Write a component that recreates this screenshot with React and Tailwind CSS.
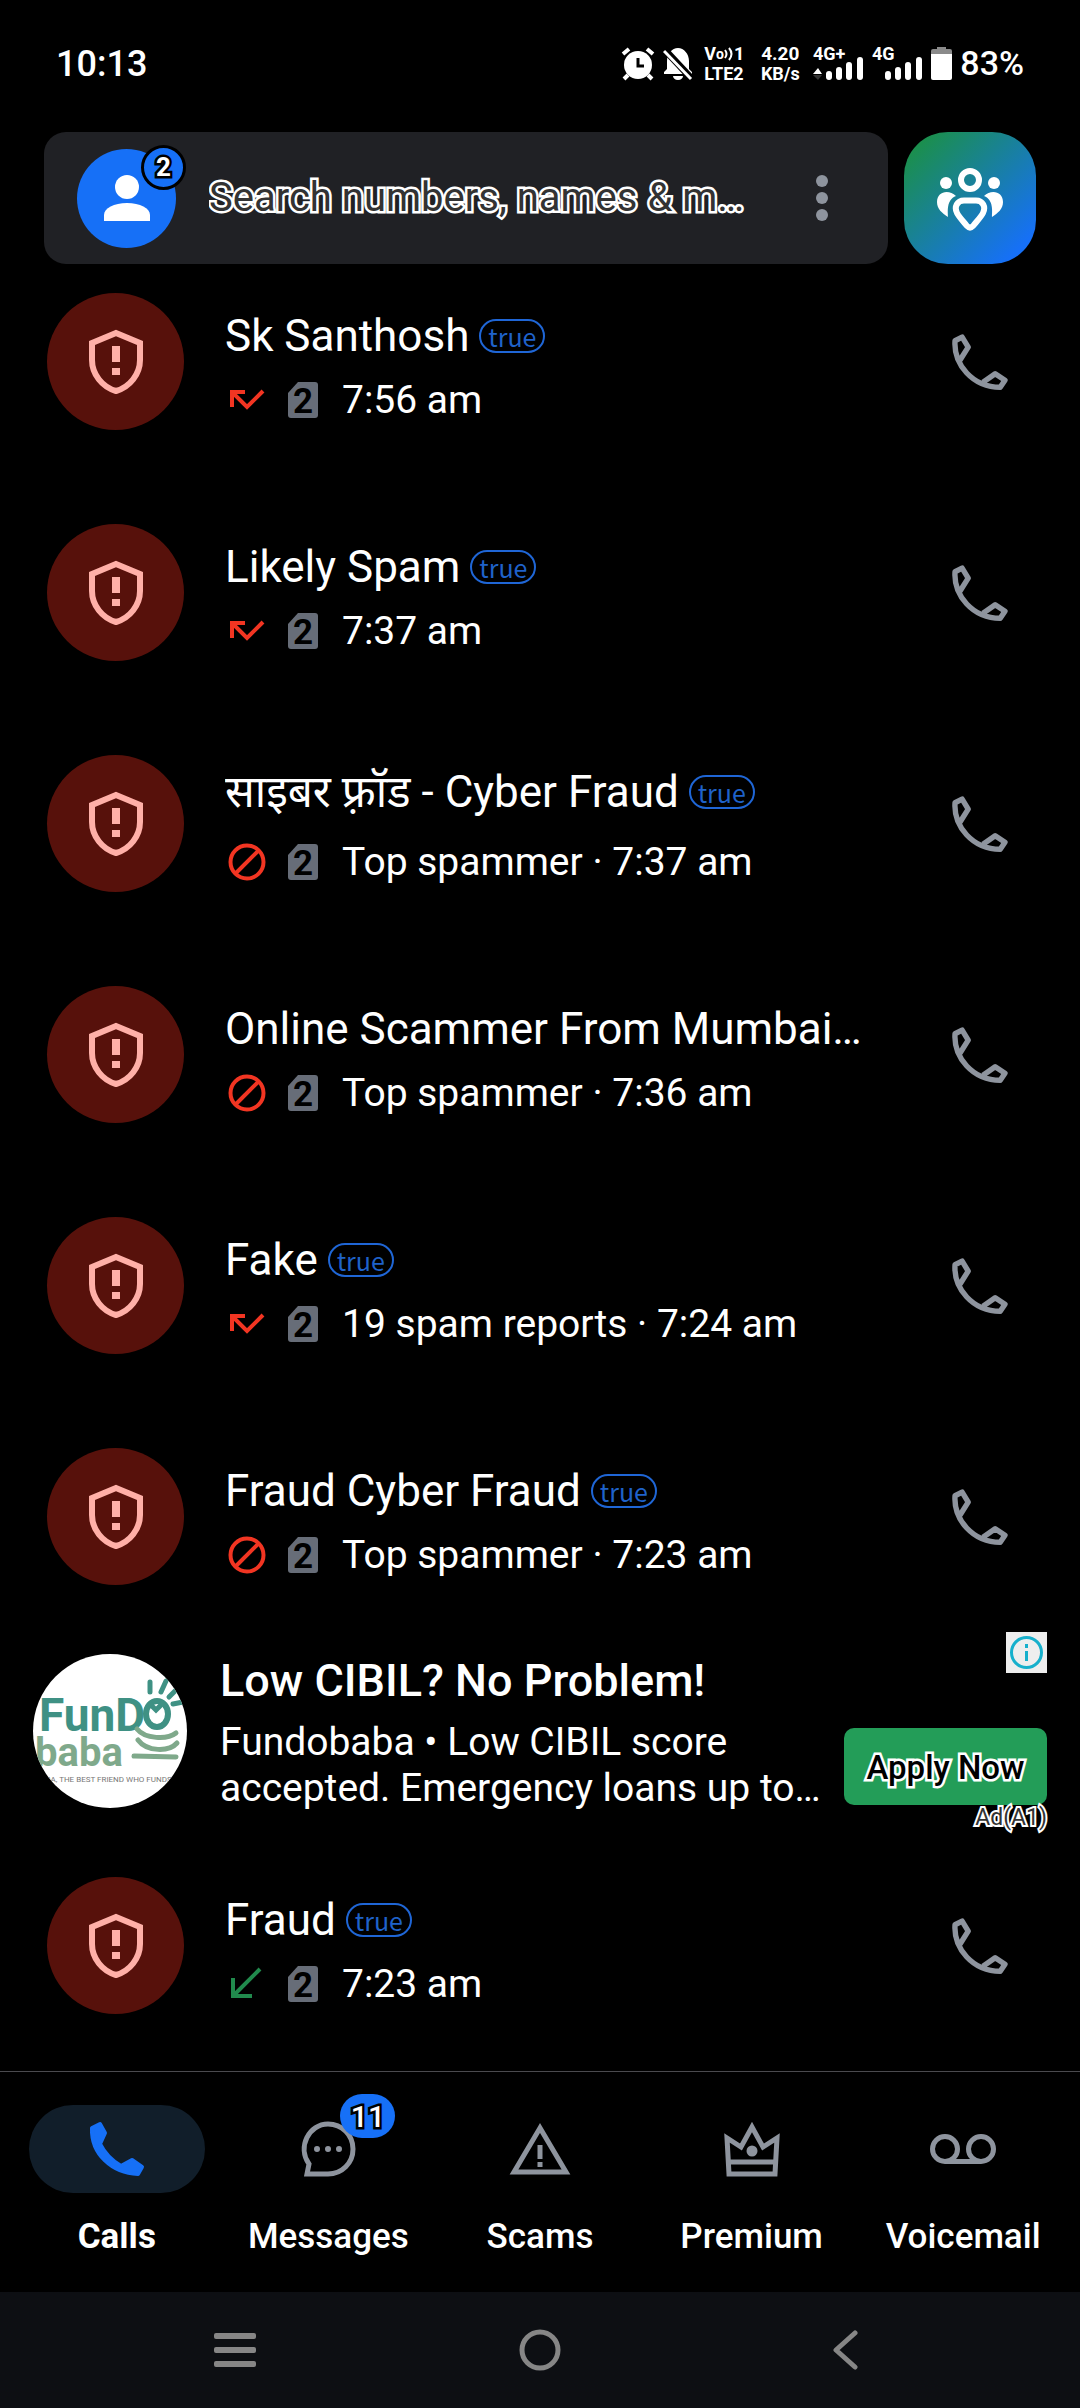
import React from 'react';

const calls = [
  { name: 'Sk Santhosh', type: 'missed', info: '7:56 am', verified: true },
  { name: 'Likely Spam', type: 'missed', info: '7:37 am', verified: true },
  { name: 'साइबर फ़्रॉड - Cyber Fraud', type: 'blocked', info: 'Top spammer · 7:37 am', verified: true, tall: true },
  { name: 'Online Scammer From Mumbai…', type: 'blocked', info: 'Top spammer · 7:36 am' },
  { name: 'Fake', type: 'missed', info: '19 spam reports · 7:24 am', verified: true },
  { name: 'Fraud Cyber Fraud', type: 'blocked', info: 'Top spammer · 7:23 am', verified: true },
];

const callsAfterAd = [
  { name: 'Fraud', type: 'incoming', info: '7:23 am', verified: true },
];

function AlarmIcon() {
  return (
    <svg width="34" height="34" viewBox="0 0 34 34" fill="none">
      <circle cx="17" cy="18" r="14" fill="white" />
      <path d="M2 7 8 2M32 7 26 2M7 28 3 32M27 28 31 32" stroke="white" strokeWidth="4" />
      <path d="M17 11V19H23" stroke="black" strokeWidth="3" />
    </svg>
  );
}

function BellOffIcon() {
  return (
    <svg width="30" height="34" viewBox="0 0 30 34" fill="none">
      <path d="M1 27V25L4 22V14C4 7 9 1 15 1S26 7 26 14V22L29 25V27Z" fill="white" />
      <path d="M10 29H20C20 31 18 33 15 33S10 31 10 29Z" fill="white" />
      <path d="M1 2 29 32" stroke="black" strokeWidth="7" />
      <path d="M1 4 28 32" stroke="white" strokeWidth="3" />
    </svg>
  );
}

function SignalIcon({ label, arrows }) {
  return (
    <svg width="51" height="34" viewBox="0 0 51 34" fill="white" className="overflow-visible font-['Roboto'] text-[18px] font-bold">
      <text x="0" y="13">{label}</text>
      {arrows && <path d="M0 27 5 21 9 27Z" />}
      {arrows && <path d="M0 28H9L5 33Z" fill="#333333" />}
      <rect x="13" y="24" width="6" height="9" rx="3" />
      <rect x="23" y="20" width="6" height="13" rx="3" />
      <rect x="33" y="15" width="6" height="18" rx="3" />
      <rect x="44" y="10" width="6" height="23" rx="3" />
    </svg>
  );
}

function BatteryIcon() {
  return (
    <svg width="21" height="34" viewBox="0 0 21 34">
      <path d="M6 0H15V2H19Q21 2 21 4V10H0V4Q0 2 2 2H6Z" fill="#8a8a8a" />
      <path d="M0 7H21V31Q21 33 19 33H2Q0 33 0 31Z" fill="white" />
    </svg>
  );
}

function StatusBar() {
  return (
    <div className="flex h-11 items-center justify-between px-14 text-4xl font-medium">
      <span>10:13</span>
      <div className="flex items-center">
        <AlarmIcon />
        <span className="ml-2"><BellOffIcon /></span>
        <span className="ml-[11px] flex w-[44px] flex-col text-[18px] leading-5 font-bold">
          <span className="flex items-center justify-between">
            <span className="flex items-center">
              V<span className="text-sm leading-5">o</span>
              <svg width="9" height="14" viewBox="0 0 9 14" fill="none" stroke="white" strokeWidth="2">
                <path d="M1 3Q4 7 1 11M5 1Q10 7 5 13" />
              </svg>
            </span>
            <span className="pr-1">1</span>
          </span>
          <span>LTE2</span>
        </span>
        <span className="ml-2.5 flex w-11 flex-col items-center text-[19px] leading-5 font-bold">
          <span>4.20</span>
          <span className="text-[18px]">KB/s</span>
        </span>
        <span className="ml-[11px]"><SignalIcon label="4G+" arrows /></span>
        <span className="ml-2"><SignalIcon label="4G" /></span>
        <span className="ml-2"><BatteryIcon /></span>
        <span className="ml-2 text-[34px]">83%</span>
      </div>
    </div>
  );
}

function SearchHeader() {
  return (
    <div className="flex gap-4 px-11">
      <div className="flex h-[132px] min-w-0 flex-1 items-center rounded-[22px] bg-[#202125] pr-[54px] pl-[33px]">
        <button aria-label="Profile" className="relative flex size-[99px] shrink-0 items-center justify-center rounded-full bg-[#1670f7]">
          <svg width="46" height="46" viewBox="0 0 46 46" fill="white">
            <circle cx="23" cy="12" r="12" />
            <path d="M0 46V40C0 33 10 28 23 28S46 33 46 40V46Z" />
          </svg>
          <span className="absolute -top-1 -right-2.5 flex size-[45px] items-center justify-center rounded-full border-3 border-black bg-[#1670f7] text-[26px] font-bold [-webkit-text-stroke:5px_black] [paint-order:stroke_fill]">
            2
          </span>
        </button>
        <input
          type="text"
          aria-label="Search"
          placeholder="Search numbers, names & m…"
          className="ml-[30px] h-[60px] min-w-0 flex-1 bg-transparent pl-[3px] text-[40px] text-[#333333] outline-none [-webkit-text-stroke:5px_white] [paint-order:stroke_fill] placeholder:text-[#333333] placeholder:opacity-100"
        />
        <button aria-label="More options" className="shrink-0 px-1.5">
          <svg width="12" height="46" viewBox="0 0 12 46" fill="#8e949e">
            <circle cx="6" cy="6" r="6" />
            <circle cx="6" cy="23" r="6" />
            <circle cx="6" cy="40" r="6" />
          </svg>
        </button>
      </div>
      <button aria-label="Family" className="flex size-[132px] shrink-0 items-center justify-center rounded-[44px] bg-linear-to-br/srgb from-[#1b8f4d] from-10% to-[#1670f7] to-88%">
        <svg width="66" height="65" viewBox="0 0 66 65" fill="white">
          <circle cx="33" cy="14" r="9" fill="none" stroke="white" strokeWidth="6" />
          <circle cx="9" cy="17" r="6" />
          <circle cx="57" cy="17" r="6" />
          <path d="M19 30C9 34 11 46 11 51C5 47 0 43 0 36C0 25 12 23 19 30Z" />
          <path d="M47 30C57 34 55 46 55 51C61 47 66 43 66 36C66 25 54 23 47 30Z" />
          <path
            d="M27 34.5H39C46 34.5 49 41 46 47C44 51 40 55 36 60Q33 63 30 60C26 55 22 51 20 47C17 41 20 34.5 27 34.5Z"
            fill="none"
            stroke="white"
            strokeWidth="6"
          />
        </svg>
      </button>
    </div>
  );
}

function ShieldIcon() {
  return (
    <svg width="54" height="66" viewBox="0 0 54 66" fill="none">
      <path d="M27 4 51 14V31C51 45 41 58 27 62C13 58 3 45 3 31V14Z" stroke="#ffb0a8" strokeWidth="6" />
      <path d="M23 17H31V33H23ZM23 39H31V46H23Z" fill="#ffb0a8" />
    </svg>
  );
}

function PhoneIcon() {
  return (
    <svg width="56" height="56" viewBox="160 101 166 166" fill="none" stroke="#8e949e" strokeWidth="16" strokeLinejoin="round">
      <path d="M184 178 208 140 190 110 169 121C164 192 222 259 303 259L317 238 288 219 252 244" />
    </svg>
  );
}

function CallTypeIcon({ type }) {
  if (type === 'blocked') {
    return (
      <svg width="38" height="38" viewBox="0 0 38 38" fill="none" stroke="#f23522" strokeWidth="4">
        <circle cx="19" cy="19" r="16.5" />
        <path d="M7 31 31 7" />
      </svg>
    );
  }
  if (type === 'incoming') {
    return (
      <svg width="38" height="38" viewBox="0 0 38 38" fill="none" stroke="#218a4d" strokeWidth="4">
        <path d="M32 4 6 30M5 13V31H24" />
      </svg>
    );
  }
  return (
    <svg width="38" height="38" viewBox="0 0 38 38" fill="none" stroke="#f23522" strokeWidth="4">
      <path d="M17 11H4V26M4 11 19 26 35 10" />
    </svg>
  );
}

function SimIcon() {
  return (
    <svg width="30" height="36" viewBox="0 0 30 36" className="overflow-visible font-['Roboto'] text-[35px] font-bold">
      <path d="M10 0H27Q30 0 30 3V33Q30 36 27 36H3Q0 36 0 33V11Z" fill="#676d78" />
      <text x="15" y="31" textAnchor="middle" fill="black">2</text>
    </svg>
  );
}

function CallRow({ call }) {
  return (
    <li className="flex h-[137px] items-center pr-[72px] pl-[47px]">
      <div className="flex size-[137px] shrink-0 items-center justify-center rounded-full bg-[#57110b]">
        <ShieldIcon />
      </div>
      <div className="ml-[41px] min-w-0 flex-1 self-end pb-1.5">
        <div className="flex items-center gap-2.5">
          <span className={call.tall ? 'truncate text-[44px] leading-[68px]' : 'truncate text-[44px] leading-14'}>
            {call.name}
          </span>
          {call.verified && (
            <span className="flex h-[34px] w-[66px] shrink-0 items-center justify-center rounded-full border-2 border-[#1f66d6] font-['Noto_Sans_CJK_SC',sans-serif] text-[25px] leading-7 text-[#1f62c9]">
              true
            </span>
          )}
        </div>
        <div className="mt-3 flex h-12 items-center pl-[3px] text-[39px]">
          <CallTypeIcon type={call.type} />
          <span className="ml-[22px]"><SimIcon /></span>
          <span className="ml-6">{call.info}</span>
        </div>
      </div>
      <button aria-label={`Call ${call.name}`} className="ml-8 shrink-0">
        <PhoneIcon />
      </button>
    </li>
  );
}

function FundobabaLogo() {
  return (
    <svg width="154" height="154" viewBox="0 0 154 154" className="shrink-0 rounded-full bg-white font-['Roboto'] font-bold">
      <text x="6" y="77" fill="#3f9184" className="text-[46px]">FunD</text>
      <ellipse cx="124" cy="60" rx="11" ry="13" fill="white" stroke="#3f9184" strokeWidth="6" />
      <path d="M117 50 123 56 130 49M117 28V38M128 38 133 27M136 43 145 34M140 50 150 48" stroke="#3f9184" strokeWidth="5" strokeLinecap="round" fill="none" />
      <text x="2" y="112" fill="#7fa98b" className="text-[40px]">baba</text>
      <g stroke="#7fa98b" strokeWidth="5" fill="none" strokeLinecap="round">
        <path d="M104 75C112 85 134 86 143 79" />
        <path d="M105 86C114 98 136 98 144 89" />
        <path d="M101 102 143 103" />
      </g>
      <text x="79" y="128" textAnchor="middle" fill="#777777" className="text-[8px] font-normal">
        BA, THE BEST FRIEND WHO FUNDS Y
      </text>
    </svg>
  );
}

function AdCard() {
  return (
    <li className="flex items-start px-[33px]">
      <div className="mt-[22px] shrink-0">
        <FundobabaLogo />
      </div>
      <div className="mt-[23px] ml-[33px] min-w-0 flex-1">
        <h2 className="text-[45px] leading-[52px] font-medium">Low CIBIL? No Problem!</h2>
        <p className="mt-3 text-[39px] leading-[46px]">
          Fundobaba • Low CIBIL score
          <br />
          accepted. Emergency loans up to…
        </p>
      </div>
      <div className="flex shrink-0 flex-col items-end">
        <button aria-label="Ad info" className="flex size-[41px] items-center justify-center bg-[#eeeeee]">
          <svg width="33" height="33" viewBox="0 0 33 33" fill="none" stroke="#17b0cc" strokeWidth="3">
            <circle cx="16.5" cy="16.5" r="15" />
            <path d="M16.5 15V25M16.5 8V12" />
          </svg>
        </button>
        <a href="#apply" className="mt-[55px] flex h-[77px] w-[203px] items-center justify-center rounded-[10px] bg-[#239d58] pt-0.5 text-[33px] font-medium text-black [-webkit-text-stroke:5px_white] [paint-order:stroke_fill]">
          Apply Now
        </a>
        <span className="text-[23px] leading-[25px] text-[#333333] [-webkit-text-stroke:4px_white] [paint-order:stroke_fill]">
          Ad(A1)
        </span>
      </div>
    </li>
  );
}

const tabs = [
  {
    label: 'Calls',
    active: true,
    icon: (
      <svg width="56" height="56" viewBox="0 0 56 56" fill="#1670f7" stroke="#1670f7" strokeWidth="4" strokeLinejoin="round">
        <path d="M3 7 11 3 16 12 11 23C16 33 23 40 32 45L43 39 53 46 49 53C23 52 2 33 3 7Z" />
      </svg>
    ),
  },
  {
    label: 'Messages',
    badge: '11',
    icon: (
      <svg width="56" height="56" viewBox="0 0 56 56" fill="none">
        <path d="M7 53 9 43C-3 26 9 3 28 3C42 3 53 14 53 28S42 53 28 53Z" stroke="#8e949e" strokeWidth="5" />
        <path d="M14 28a3 3 0 1 0 6 0a3 3 0 1 0-6 0ZM25 28a3 3 0 1 0 6 0a3 3 0 1 0-6 0ZM36 28a3 3 0 1 0 6 0a3 3 0 1 0-6 0Z" fill="#8e949e" />
      </svg>
    ),
  },
  {
    label: 'Scams',
    icon: (
      <svg width="62" height="56" viewBox="0 0 62 56" fill="none" stroke="#8e949e" strokeWidth="5">
        <path d="M31 7 5 51H57Z" />
        <path d="M31 24V38M31 41V46" />
      </svg>
    ),
  },
  {
    label: 'Premium',
    icon: (
      <svg width="56" height="56" viewBox="0 0 56 56" fill="none" stroke="#8e949e" strokeWidth="5">
        <path d="M5 53 3 17 17 26 28 6 39 26 53 17 51 53ZM5 41H51" />
        <circle cx="28" cy="30" r="5.5" fill="#8e949e" stroke="none" />
      </svg>
    ),
  },
  {
    label: 'Voicemail',
    icon: (
      <svg width="66" height="56" viewBox="0 0 66 56" fill="none" stroke="#8e949e" strokeWidth="5">
        <circle cx="15" cy="28" r="12.5" />
        <circle cx="51" cy="28" r="12.5" />
        <path d="M15 40.5H51" />
      </svg>
    ),
  },
];

function TabBar() {
  return (
    <nav className="grid h-[221px] grid-cols-5 border-t border-[#4a4a4e] px-[11px] pt-[33px]">
      {tabs.map((tab) => (
        <button key={tab.label} className="flex flex-col items-center">
          <span className={tab.active ? 'relative flex h-[88px] w-44 items-center justify-center rounded-full bg-[#111e2a]' : 'relative flex h-[88px] w-44 items-center justify-center'}>
            {tab.icon}
            {tab.badge && (
              <span className="absolute -top-[11px] right-[21px] flex h-11 w-[55px] items-center justify-center rounded-full bg-[#1670f7] text-[30px] font-medium [-webkit-text-stroke:5px_black] [paint-order:stroke_fill]">
                {tab.badge}
              </span>
            )}
          </span>
          <span className={tab.active ? 'mt-[22px] text-[35px] leading-11 font-bold' : 'mt-[22px] text-[35px] leading-11 font-medium'}>
            {tab.label}
          </span>
        </button>
      ))}
    </nav>
  );
}

function SystemBar() {
  return (
    <div className="grid h-[116px] grid-cols-3 items-center justify-items-center bg-[#0d0f13] px-[82px]">
      <button aria-label="Recent apps">
        <svg width="42" height="34" viewBox="0 0 42 34" fill="#868686">
          <rect y="0" width="42" height="6" rx="2" />
          <rect y="14" width="42" height="6" rx="2" />
          <rect y="28" width="42" height="6" rx="2" />
        </svg>
      </button>
      <button aria-label="Home">
        <svg width="42" height="42" viewBox="0 0 42 42" fill="none" stroke="#868686" strokeWidth="5">
          <circle cx="21" cy="21" r="18" />
        </svg>
      </button>
      <button aria-label="Back">
        <svg width="26" height="40" viewBox="0 0 26 40" fill="none" stroke="#868686" strokeWidth="5" strokeLinecap="round" strokeLinejoin="round">
          <path d="M23 3 4 20 23 37" />
        </svg>
      </button>
    </div>
  );
}

export default function App() {
  return (
    <div className="flex min-h-screen flex-col bg-black font-['Roboto','Noto_Sans',sans-serif] text-white">
      <header className="flex flex-col gap-[46px] pt-[42px]">
        <StatusBar />
        <SearchHeader />
      </header>
      <main className="flex-1 pt-[29px] pb-[57px]">
        <ul className="flex flex-col gap-[94px]">
          {calls.map((call) => (
            <CallRow key={call.name} call={call} />
          ))}
        </ul>
        <ul className="mt-[47px] flex flex-col gap-[47px]">
          <AdCard />
          {callsAfterAd.map((call) => (
            <CallRow key={call.name} call={call} />
          ))}
        </ul>
      </main>
      <TabBar />
      <SystemBar />
    </div>
  );
}
